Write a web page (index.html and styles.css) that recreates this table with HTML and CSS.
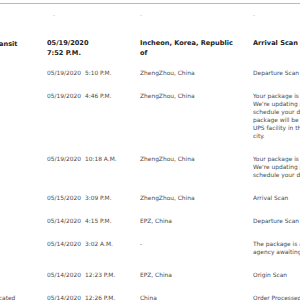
FILE: index.html
```html
<!DOCTYPE html>
<html>
<head>
<meta charset="utf-8">
<link rel="stylesheet" href="styles.css">
</head>
<body>
<div class="page">
  <div class="rule"></div>
  <table class="activity">
    <colgroup><col class="c1"><col class="c2"><col class="c3"><col class="c4"></colgroup>
    <tr class="dash-row"><td></td><td class="dash d2">-</td><td class="dash">-</td><td class="dash">-</td></tr>
    <tr class="head">
      <td class="status">Transit</td>
      <td>05/19/2020<br>7:52 P.M.</td>
      <td class="loc">Incheon, Korea, Republic of</td>
      <td>Arrival Scan</td>
    </tr>
    <tr><td></td><td><span class="date">05/19/2020</span>5:10 P.M.</td><td>ZhengZhou, China</td><td>Departure Scan</td></tr>
    <tr><td></td><td><span class="date">05/19/2020</span>4:46 P.M.</td><td>ZhengZhou, China</td><td class="desc">Your package is in transit.<br>We're updating plans to<br>schedule your delivery. Your<br>package will be taken to the<br>UPS facility in the destination<br>city.</td></tr>
    <tr><td></td><td><span class="date">05/19/2020</span>10:18 A.M.</td><td>ZhengZhou, China</td><td class="desc">Your package is in transit.<br>We're updating plans to<br>schedule your delivery.</td></tr>
    <tr><td></td><td><span class="date">05/15/2020</span>3:09 P.M.</td><td>ZhengZhou, China</td><td>Arrival Scan</td></tr>
    <tr><td></td><td><span class="date">05/14/2020</span>4:15 P.M.</td><td>EPZ, China</td><td>Departure Scan</td></tr>
    <tr><td></td><td><span class="date">05/14/2020</span>3:02 A.M.</td><td>-</td><td class="desc">The package is at the clearing<br>agency awaiting final release.</td></tr>
    <tr><td></td><td><span class="date">05/14/2020</span>12:23 P.M.</td><td>EPZ, China</td><td>Origin Scan</td></tr>
    <tr><td>Located</td><td><span class="date">05/14/2020</span>12:26 P.M.</td><td>China</td><td>Order Processed</td></tr>
  </table>
</div>
</body>
</html>
```
FILE: styles.css
```css
html, body {
  margin: 0;
  padding: 0;
  background: #ffffff;
  overflow: hidden;
}
.page {
  width: 300px;
  height: 300px;
  overflow: hidden;
  padding-top: 3px;
  font-family: "DejaVu Sans", Verdana, sans-serif;
  font-size: 5.9px;
  line-height: 8px;
  color: #4a4a4a;
}
.rule {
  height: 1px;
  background: #c9b99c;
}
.activity {
  margin-left: -8px;
  border-collapse: collapse;
  table-layout: fixed;
  width: 420px;
}
.c1 { width: 55px; }
.c2 { width: 93px; }
.c3 { width: 113px; }
.c4 { width: 159px; }
.activity td {
  padding: 7px 0 8px 0;
  vertical-align: top;
  white-space: nowrap;
  overflow: hidden;
}
.dash-row td {
  padding: 7px 0 13px 0;
  color: #b8b8b8;
}
.dash-row .d2 { padding-left: 6px; }
.head td {
  padding: 5.5px 0 4.5px 0;
  font-weight: bold;
  font-size: 6.6px;
  line-height: 10px;
  color: #222222;
}
.head td.loc {
  white-space: normal;
  padding-right: 16px;
}
.head .status { padding-top: 6.5px; }
.date {
  display: inline-block;
  width: 38px;
}
```
